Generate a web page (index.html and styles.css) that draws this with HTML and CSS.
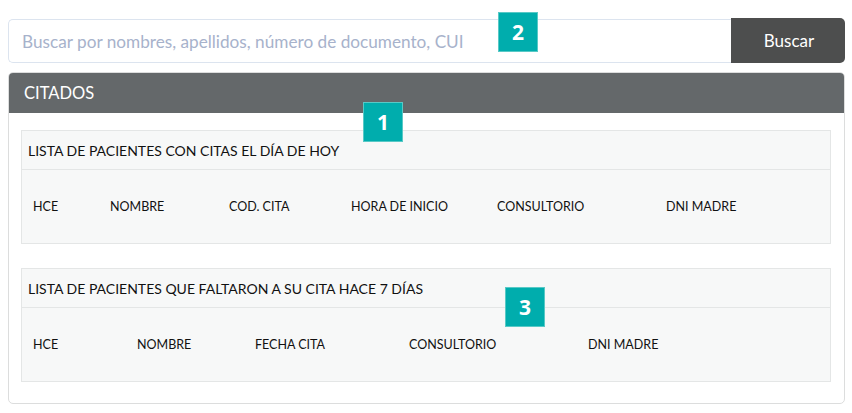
FILE: index.html
```html
<!DOCTYPE html>
<html lang="es">
<head>
<meta charset="utf-8">
<title>Citados</title>
<link rel="stylesheet" href="styles.css">
</head>
<body>
<div class="page">
  <div class="search">
    <input class="search-input" type="text" placeholder="Buscar por nombres, apellidos, número de documento, CUI">
    <button class="search-btn">Buscar</button>
  </div>
  <div class="panel">
    <div class="panel-head">CITADOS</div>
    <div class="panel-body">
      <div class="box">
        <div class="box-title">LISTA DE PACIENTES CON CITAS EL DÍA DE HOY</div>
        <div class="cols cols-today">
          <span>HCE</span><span>NOMBRE</span><span>COD. CITA</span><span>HORA DE INICIO</span><span>CONSULTORIO</span><span>DNI MADRE</span>
        </div>
      </div>
      <div class="box">
        <div class="box-title">LISTA DE PACIENTES QUE FALTARON A SU CITA HACE 7 DÍAS</div>
        <div class="cols cols-missed">
          <span>HCE</span><span>NOMBRE</span><span>FECHA CITA</span><span>CONSULTORIO</span><span>DNI MADRE</span>
        </div>
      </div>
    </div>
  </div>
</div>
<div class="badge badge-1">1</div>
<div class="badge badge-2">2</div>
<div class="badge badge-3">3</div>
</body>
</html>
```
FILE: styles.css
```css
* { box-sizing: border-box; }
html, body { margin: 0; padding: 0; background: #fff; }
body {
  font-family: "Lato", "Open Sans", sans-serif;
  color: #1a1a1a;
  position: relative;
  width: 852px;
  height: 413px;
  overflow: hidden;
}
.page {
  padding: 18px 7px 0 8px;
}
.search {
  display: flex;
  align-items: flex-end;
  height: 45px;
}
.search-input {
  flex: 1;
  height: 44px;
  border: 1px solid #dce4ef;
  border-right: none;
  border-radius: 5px 0 0 5px;
  padding: 0 0 0 13px;
  font-family: inherit;
  font-size: 17.2px;
  color: #333;
  outline: none;
  background: #fff;
}
.search-input::placeholder { color: #a7b2cb; }
.search-btn {
  width: 114px;
  height: 45px;
  border: none;
  border-radius: 0 5px 5px 0;
  background: #4d4e4e;
  color: #fff;
  font-family: inherit;
  font-size: 17px;
  padding: 0 0 0 2px;
}
.panel {
  margin-top: 9px;
  border: 1px solid #dcdddd;
  border-radius: 5px;
  overflow: hidden;
  height: 332px;
}
.panel-head {
  height: 40px;
  background: #64686a;
  color: #fff;
  font-size: 16.5px;
  display: flex;
  align-items: center;
  padding-left: 15px;
}
.panel-body {
  padding: 17px 13px 0 12px;
  display: flex;
  flex-direction: column;
  gap: 24px;
}
.box {
  background: #f7f8f8;
  border: 1px solid #e4e6e6;
  height: 114px;
  display: flex;
  flex-direction: column;
}
.box-title {
  height: 39px;
  border-bottom: 1px solid #e4e6e6;
  display: flex;
  align-items: center;
  padding-left: 6px;
  font-size: 14px;
  color: #111;
}
.cols {
  flex: 1;
  display: grid;
  align-items: center;
  padding-left: 11px;
  font-size: 12.5px;
  color: #111;
}
.cols-today { grid-template-columns: 77px 119px 122px 146px 169px 1fr; }
.cols-missed { grid-template-columns: 104px 118px 154px 179px 1fr; }
.badge {
  position: absolute;
  width: 40px;
  height: 40px;
  background: #00adad;
  border: 1px solid #58c9c6;
  color: #fff;
  font-family: "Open Sans", sans-serif;
  font-weight: 700;
  font-size: 21px;
  display: flex;
  align-items: center;
  justify-content: center;
}
.badge-1 { left: 363px; top: 102px; }
.badge-2 { left: 498px; top: 12px; }
.badge-3 { left: 505px; top: 287px; }
```
